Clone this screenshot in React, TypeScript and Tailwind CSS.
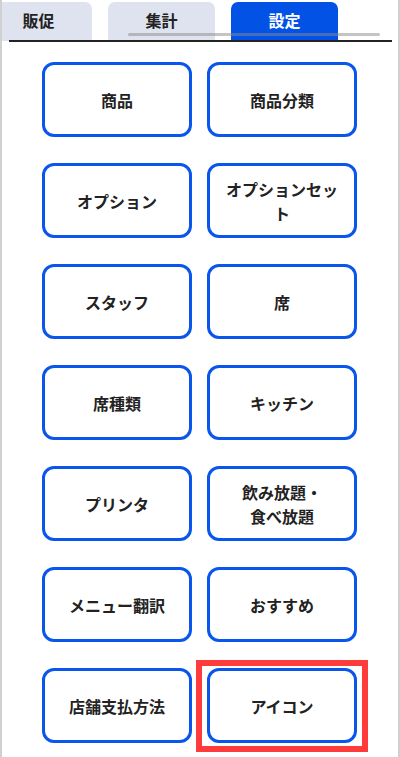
import React from "react";

const tabs = [
  { name: "販促", active: false },
  { name: "集計", active: false },
  { name: "設定", active: true },
];

const items = [
  "商品",
  "商品分類",
  "オプション",
  "オプションセット",
  "スタッフ",
  "席",
  "席種類",
  "キッチン",
  "プリンタ",
  "飲み放題・食べ放題",
  "メニュー翻訳",
  "おすすめ",
  "店舗支払方法",
  "アイコン",
];

const App = () => {
  return (
    <div
      className="w-[400px] h-[757px] overflow-hidden bg-white border-x-2 border-[#d0d0d0]"
      style={{ fontFamily: '"Noto Sans CJK JP", "Noto Sans", sans-serif' }}>
      {/* tabs */}
      <div className="relative h-[42px] overflow-hidden">
        <div className="flex gap-[16px] ml-[-17px] pt-[2px]">
          {tabs.map((t) => (
            <div
              key={t.name}
              className={
                t.active
                  ? "w-[107px] h-[39px] shrink-0 rounded-t-[7px] bg-[#0352e6] text-white flex items-center justify-center text-[16px] font-bold"
                  : "w-[107px] h-[39px] shrink-0 rounded-t-[7px] bg-[#dfe3ef] text-[#222] flex items-center justify-center text-[16px] font-bold"
              }>
              <span className="-mt-[3px]">{t.name}</span>
            </div>
          ))}
        </div>
        <div className="absolute left-[126px] top-[33px] w-[252px] h-[3px] rounded-full bg-[#8a8a8a]/50"></div>
        <div className="absolute left-[7px] right-[6px] top-[40px] h-[1.5px] bg-[#222]"></div>
      </div>

      {/* menu grid */}
      <div className="grid grid-cols-2 gap-x-[15px] gap-y-[26px] pl-[40px] pr-[41px] pt-[20px]">
        {items.map((name) => (
          <div key={name} className="relative">
            <button className="w-full h-[75px] rounded-[12px] border-[3px] border-[#0a56ec] bg-white flex items-center justify-center px-3 text-[16px] leading-[24px] font-bold text-[#222]">
              {name === "飲み放題・食べ放題" ? (
                <span>
                  飲み放題・
                  <br />
                  食べ放題
                </span>
              ) : (
                name
              )}
            </button>
            {name === "アイコン" && (
              <div className="absolute -left-[11px] -right-[11px] -top-[8px] -bottom-[9px] border-[6px] border-[#ff3b3b]"></div>
            )}
          </div>
        ))}
      </div>
    </div>
  );
};

export default App;
